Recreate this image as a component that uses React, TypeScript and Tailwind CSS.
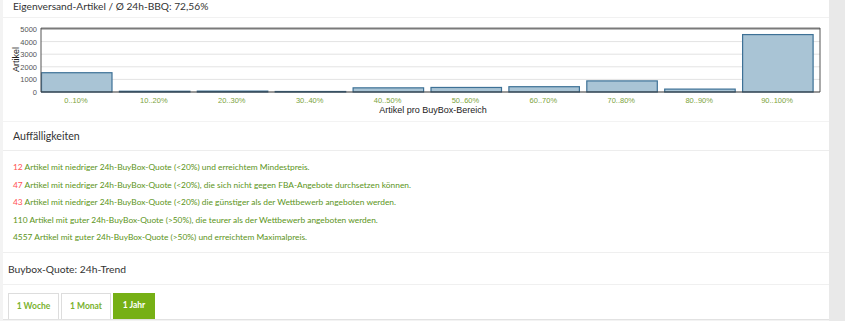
import React from "react";

const values = [1530, 60, 70, 40, 330, 360, 420, 880, 230, 4557];
const labels = ["0..10%", "10..20%", "20..30%", "30..40%", "40..50%", "50..60%", "60..70%", "70..80%", "80..90%", "90..100%"];

function Chart() {
  const left = 38;
  const right = 817;
  const top = 11;
  const bottom = 74;
  const band = (right - left) / 10;
  const scale = (bottom - top) / 5000;
  return (
    <svg width="826" height="103" className="block" style={{ fontFamily: "'Liberation Sans', Arial, sans-serif" }}>
      {[1000, 2000, 3000, 4000].map((v) => (
        <line key={v} x1={left} x2={right} y1={bottom - v * scale} y2={bottom - v * scale} stroke="#e3e3e3" strokeWidth="1" />
      ))}
      {[0, 1000, 2000, 3000, 4000, 5000].map((v) => (
        <text key={v} x={left - 4} y={bottom - v * scale + 3} fontSize="7.5" fill="#555" textAnchor="end">
          {v}
        </text>
      ))}
      <text x={0} y={0} fontSize="9" fill="#222" textAnchor="middle" transform={`translate(16 ${(top + bottom) / 2 - 1}) rotate(-90)`}>
        Artikel
      </text>
      {values.map((v, i) => {
        const h = v * scale;
        const x = left + band * i + 0.5;
        return <rect key={i} x={x} y={bottom - h} width={70.5} height={h} fill="#a9c4d5" stroke="#3d7196" strokeWidth="1.2" />;
      })}
      <line x1={left} x2={right} y1={top - 0.5} y2={top - 0.5} stroke="#7a7a7a" strokeWidth="2" />
      <line x1={left} x2={left} y1={top - 1} y2={bottom} stroke="#555" strokeWidth="1" />
      <line x1={right} x2={right} y1={top - 1} y2={bottom} stroke="#555" strokeWidth="1" />
      <line x1={left} x2={right} y1={bottom} y2={bottom} stroke="#333" strokeWidth="1.2" />
      {labels.map((l, i) => (
        <text key={l} x={left + band * i + band / 2 - 4} y={bottom + 11} fontSize="7.5" fill="#7ba33c" textAnchor="middle">
          {l}
        </text>
      ))}
      <text x={430} y={bottom + 21} fontSize="9" fill="#222" textAnchor="middle">
        Artikel pro BuyBox-Bereich
      </text>
    </svg>
  );
}

export default function App() {
  const items: { n: string; red: boolean; t: string }[] = [
    { n: "12", red: true, t: " Artikel mit niedriger 24h-BuyBox-Quote (<20%) und erreichtem Mindestpreis." },
    { n: "47", red: true, t: " Artikel mit niedriger 24h-BuyBox-Quote (<20%), die sich nicht gegen FBA-Angebote durchsetzen können." },
    { n: "43", red: true, t: " Artikel mit niedriger 24h-BuyBox-Quote (<20%) die günstiger als der Wettbewerb angeboten werden." },
    { n: "110", red: false, t: " Artikel mit guter 24h-BuyBox-Quote (>50%), die teurer als der Wettbewerb angeboten werden." },
    { n: "4557", red: false, t: " Artikel mit guter 24h-BuyBox-Quote (>50%) und erreichtem Maximalpreis." },
  ];
  return (
    <div className="flex h-[321px] w-[845px] overflow-hidden bg-[#e9e9e9]" style={{ fontFamily: "Lato, 'Open Sans', sans-serif" }}>
      <div className="flex w-[829px] flex-col bg-[#f3f3f3] pl-[3px]">
        <div className="flex flex-col bg-white">
          <div className="h-[18px] border-b border-[#f1f1f1] pl-[10px] text-[10.2px] leading-[13px] text-[#333]">
            Eigenversand-Artikel / Ø 24h-BBQ: 72,56%
          </div>
          <div className="h-[103px]">
            <Chart />
          </div>
        </div>
        <div className="mt-[1px] flex flex-col bg-white">
          <div className="flex h-[29px] items-center border-b border-[#ededed] pl-[10px] pt-[1px] text-[10.6px] text-[#333]">
            Auffälligkeiten
          </div>
          <div className="flex flex-col pb-[5px] pl-[10px] pt-[8px] text-[8.4px] text-[#5b9420]">
            {items.map((it) => (
              <div key={it.n} className="h-[17.5px] leading-[17.5px]">
                <span className={it.red ? "text-[#ff5353]" : ""}>{it.n}</span>
                {it.t}
              </div>
            ))}
          </div>
        </div>
        <div className="h-[1px] bg-[#efefef]" />
        <div className="flex flex-col bg-white">
          <div className="flex h-[32px] items-center border-b border-[#f0f0f0] pl-[5px] pt-[4px] text-[10.3px] text-[#333]">
            Buybox-Quote: 24h-Trend
          </div>
          <div className="flex gap-[2px] border-b border-[#e2e2e2] pl-[5px] pt-[8px]">
            <div className="flex h-[26px] w-[51px] items-center justify-center border border-b-0 border-[#dddddd] text-[8.5px] font-bold text-[#7ab22e]">
              1 Woche
            </div>
            <div className="flex h-[26px] w-[50px] items-center justify-center border border-b-0 border-[#dddddd] text-[8.5px] font-bold text-[#7ab22e]">
              1 Monat
            </div>
            <div className="flex h-[26px] w-[42px] items-center justify-center bg-[#76b015] text-[8.5px] font-bold text-white">
              1 Jahr
            </div>
          </div>
        </div>
      </div>
    </div>
  );
}
